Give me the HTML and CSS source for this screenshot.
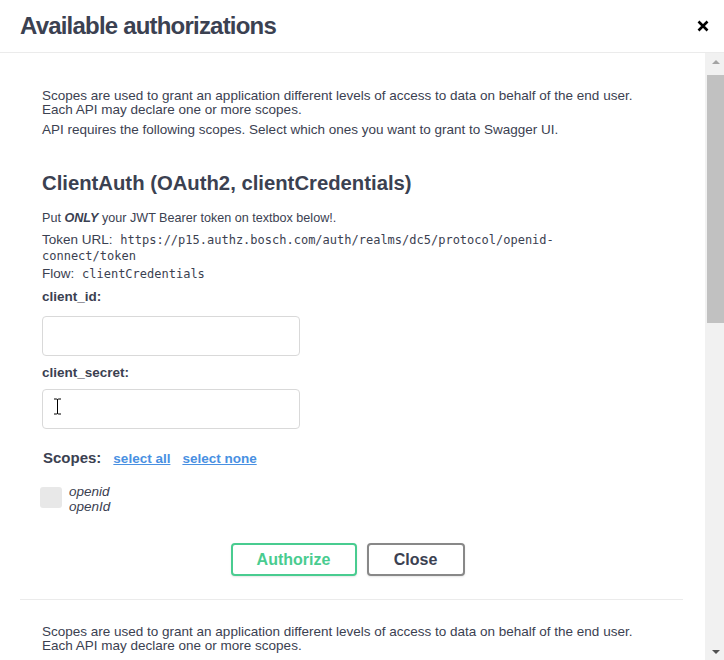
FILE: index.html
```html
<!DOCTYPE html>
<html lang="en">

<head>
    <meta charset="UTF-8">
    <meta name="viewport" content="width=device-width, initial-scale=1.0">
    <title>Available authorizations</title>
    <link rel="stylesheet" href="styles.css">
</head>

<body>
    <div class="modal">
        <div class="modal-header">
            <h3 class="modal-title">Available authorizations</h3>
            <button class="close-modal" aria-label="Close">
                <svg width="12" height="12" viewBox="0 0 12 12">
                    <path d="M1.5 1.5 L10.5 10.5 M10.5 1.5 L1.5 10.5" stroke="#000" stroke-width="2.6" fill="none" />
                </svg>
            </button>
        </div>
        <div class="modal-body">
            <div class="modal-content">
                <!-- ClientAuth -->
                <div class="auth-container">
                    <div class="scopes-info">
                        <p>Scopes are used to grant an application different levels of access to data on behalf of the end user.<br>Each API may declare one or more scopes.</p>
                        <p>API requires the following scopes. Select which ones you want to grant to Swagger UI.</p>
                    </div>
                    <h2 class="auth-name">ClientAuth (OAuth2, clientCredentials)</h2>
                    <p class="auth-desc">Put <strong><em>ONLY</em></strong> your JWT Bearer token on textbox below!.</p>
                    <p class="flow-info">Token URL: <code>https://p15.authz.bosch.com/auth/realms/dc5/protocol/openid-connect/token</code></p>
                    <p class="flow-info">Flow: <code>clientCredentials</code></p>
                    <div class="field">
                        <label for="client_id">client_id:</label>
                        <input type="text" id="client_id">
                    </div>
                    <div class="field">
                        <label for="client_secret">client_secret:</label>
                        <div class="input-wrap">
                            <input type="text" id="client_secret">
                            <svg class="ibeam" width="9" height="17" viewBox="0 0 9 17">
                                <path d="M1 1 H3.5 M5.5 1 H8 M4.5 1.5 V15.5 M1 16 H3.5 M5.5 16 H8 M3.5 1 Q4.5 1 4.5 2 Q4.5 1 5.5 1 M3.5 16 Q4.5 16 4.5 15 Q4.5 16 5.5 16" stroke="#000" stroke-width="1" fill="none" />
                            </svg>
                        </div>
                    </div>
                    <div class="scopes-head">
                        <h2>Scopes:</h2>
                        <a href="#">select all</a>
                        <a href="#">select none</a>
                    </div>
                    <div class="scope-item">
                        <span class="checkbox"></span>
                        <div class="scope-text">
                            <p>openid</p>
                            <p>openId</p>
                        </div>
                    </div>
                    <div class="auth-btn-wrapper">
                        <button class="btn authorize">Authorize</button>
                        <button class="btn btn-done">Close</button>
                    </div>
                </div>
                <!-- next scheme, only its first lines are in view -->
                <div class="auth-container">
                    <div class="scopes-info">
                        <p>Scopes are used to grant an application different levels of access to data on behalf of the end user.<br>Each API may declare one or more scopes.</p>
                    </div>
                </div>
            </div>
            <div class="scrollbar">
                <span class="scroll-btn up"></span>
                <div class="scroll-track">
                    <div class="scroll-thumb"></div>
                </div>
                <span class="scroll-btn down"></span>
            </div>
        </div>
    </div>
</body>

</html>
```

FILE: styles.css
```css
* {
    padding: 0;
    margin: 0;
    box-sizing: border-box;
}

body {
    font-family: "Liberation Sans", Arial, sans-serif;
    color: #3b4151;
    background: #fff;
}

.modal {
    height: 660px;
    display: flex;
    flex-direction: column;
}

.modal-header {
    height: 53px;
    flex: none;
    display: flex;
    align-items: center;
    justify-content: space-between;
    padding: 0 15px 0 20px;
    border-bottom: 1px solid #ebebeb;
}

.modal-title {
    font-size: 24px;
    font-weight: 700;
    letter-spacing: -0.8px;
    color: #3b4151;
}

.close-modal {
    border: none;
    background: none;
    width: 12px;
    height: 12px;
    display: flex;
}

.modal-body {
    flex: 1;
    min-height: 0;
    display: flex;
}

.modal-content {
    flex: 1;
    overflow: hidden;
    padding: 22px 22px 20px 20px;
}

/* fake scrollbar, the headless browser hides the real one */
.scrollbar {
    width: 19px;
    flex: none;
    display: flex;
    flex-direction: column;
    background: #f1f1f1;
}

.scroll-btn {
    height: 17px;
    flex: none;
    display: flex;
    align-items: center;
    justify-content: center;
    padding-left: 2px;
}

.scroll-btn:after {
    content: '';
    border-left: 4px solid transparent;
    border-right: 4px solid transparent;
}

.scroll-btn.up:after {
    border-bottom: 4px solid #a3a3a3;
}

.scroll-btn.down:after {
    border-top: 4px solid #505050;
}

.scroll-track {
    flex: 1;
    padding-left: 2px;
}

.scroll-thumb {
    height: 248px;
    margin-top: 5px;
    background: #c1c1c1;
}

.auth-container {
    padding: 10px 42px 10px 22px;
    margin-bottom: 11px;
    border-bottom: 1px solid #ebebeb;
}

.scopes-info p {
    font-size: 13.5px;
    line-height: 14px;
    margin-top: 4px;
}

.scopes-info p + p {
    margin-top: 6px;
}

.auth-name {
    font-size: 20.3px;
    line-height: 24px;
    font-weight: 700;
    margin-top: 34px;
}

.auth-desc {
    font-size: 12.6px;
    line-height: 16px;
    margin-top: 15px;
    margin-bottom: 6px;
}

.flow-info {
    font-size: 13.5px;
    line-height: 16px;
    margin-bottom: 2px;
}

code {
    font-family: "DejaVu Sans Mono", "Liberation Mono", monospace;
    font-size: 12px;
    line-height: 1;
    margin-left: 4px;
}

.field {
    margin-top: 7px;
}

.field + .field {
    margin-top: 9px;
}

.field label {
    display: block;
    font-size: 13.5px;
    font-weight: 700;
    line-height: 16px;
    margin-bottom: 11px;
}

.field + .field label {
    margin-bottom: 8px;
}

.field input {
    display: block;
    width: 258px;
    height: 40px;
    border: 1px solid #d9d9d9;
    border-radius: 4px;
    outline: none;
}

.input-wrap {
    position: relative;
    width: 258px;
}

.ibeam {
    position: absolute;
    left: 11px;
    top: 9px;
}

.scopes-head {
    display: flex;
    align-items: baseline;
    margin-top: 20px;
}

.scopes-head h2 {
    font-size: 15px;
    line-height: 18px;
    font-weight: 700;
    margin-left: 1px;
    margin-right: 12px;
}

.scopes-head a {
    font-size: 13.5px;
    font-weight: 700;
    color: #4990e2;
    margin-right: 12px;
}

.scope-item {
    display: flex;
    align-items: flex-start;
    margin-top: 17px;
    margin-left: -2px;
}

.checkbox {
    width: 22px;
    height: 21px;
    margin-top: 3px;
    margin-right: 7px;
    background: #e8e8e8;
    border-radius: 3px;
}

.scope-text p {
    font-size: 13.5px;
    line-height: 15px;
    font-style: italic;
}

.auth-btn-wrapper {
    display: flex;
    justify-content: center;
    gap: 10px;
    margin-top: 29px;
    padding-left: 12px;
    padding-bottom: 13px;
}

.btn {
    height: 33px;
    font-family: "Liberation Sans", Arial, sans-serif;
    font-size: 16px;
    font-weight: 700;
    background: #fff;
    border: 2px solid #888;
    border-radius: 4px;
    box-shadow: 0 1px 2px rgba(0, 0, 0, 0.1);
    color: #3b4151;
}

.btn.authorize {
    width: 126px;
    border-color: #49cc90;
    color: #49cc90;
}

.btn.btn-done {
    width: 98px;
}
```
